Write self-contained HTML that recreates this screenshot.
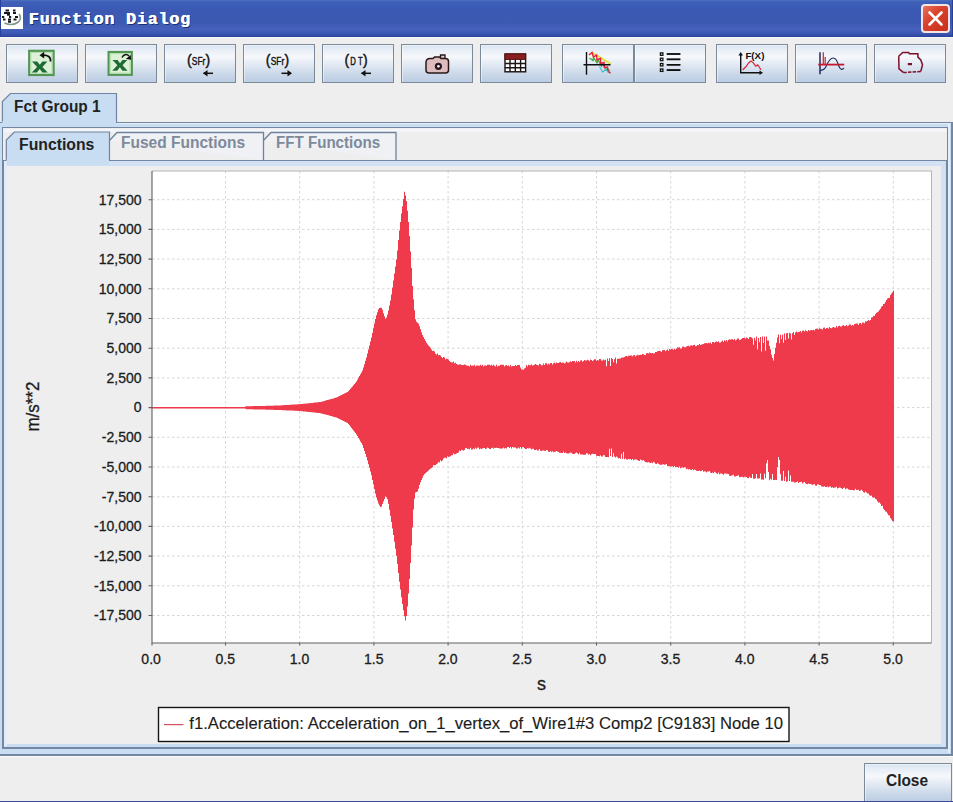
<!DOCTYPE html>
<html><head><meta charset="utf-8"><title>Function Dialog</title>
<style>
html,body{margin:0;padding:0;}
body{width:953px;height:802px;overflow:hidden;position:relative;background:#eeeeee;font-family:"Liberation Sans",sans-serif;}
.abs{position:absolute;}
#titlebar{left:0;top:0;width:953px;height:36.5px;background:linear-gradient(#4e70c2 0,#3f60b8 2px,#3b59b3 10px,#3c59b2 22px,#4561bb 29px,#3d58b4 33px,#2c449e 36.5px);}
#title{left:28.6px;top:8.6px;font:bold 16.6px/22px "Liberation Mono",monospace;letter-spacing:0.85px;color:#fff;white-space:pre;text-shadow:0.6px 0 0 #fff,1.4px 1px 0 #1c2f70;}
#appicon{left:1.2px;top:7px;width:22px;height:22px;background:#fff;}
#closex{left:921px;top:4px;width:25px;height:25px;border:2px solid #f6e4e4;border-radius:4px;background:linear-gradient(135deg,#e8705c 0,#d8432c 40%,#c8301c 100%);}
.tb{position:absolute;top:44px;width:72px;height:39px;box-sizing:border-box;border:1px solid #7a8a99;background:linear-gradient(#d9e4f1 0,#e6edf6 12%,#f6f8fb 32%,#e3eaf4 52%,#c9d7e8 80%,#bccde3 100%);box-shadow:inset 1px 1px 0 rgba(255,255,255,0.45);}
.tb svg{position:absolute;left:0;top:0;}
.line{position:absolute;background:#7487a2;}
.tabtxt{position:absolute;font-weight:bold;font-size:15px;line-height:18px;white-space:pre;color:#222;}
.ax{font-size:14px;fill:#1c1c1c;stroke:#1c1c1c;stroke-width:0.3px;font-family:"Liberation Sans",sans-serif;}
</style></head><body>
<!-- title bar -->
<div id="titlebar" class="abs"></div>
<div class="abs" style="left:0;top:0;width:1px;height:36.5px;background:#2a3f98"></div>
<div class="abs" style="left:951.5px;top:0;width:1.5px;height:36.5px;background:#2a3f98"></div>
<div id="appicon" class="abs"><svg width="22" height="22" viewBox="1 7 22 22"><path d="M4.5 23q7.500 3.500 14-1 3.500-3.500 0.500-8" stroke="#7f9a8c" stroke-width="1.600" fill="none"/><path d="M5.500 10.500h3.500M13 10.500h2.500M4 13h6M13 13h3M7 14.800h3M2 17h2.200M9 17h2.200M15 17h3M3 19.500h2.500M8 19.500h3M13.500 19.500h3M8 21.700h3" stroke="#16181c" stroke-width="2.100" fill="none"/></svg></div>
<div id="title" class="abs">Function Dialog</div>
<div id="closex" class="abs"><svg width="25" height="25" viewBox="0 0 25 25"><path d="M6.5 6.5L18.5 18.5M18.5 6.5L6.5 18.5" stroke="#fff" stroke-width="2.6" stroke-linecap="round"/></svg></div>
<div class="abs" style="left:0;top:36.5px;width:953px;height:1.5px;background:#f8f8f8"></div>

<!-- toolbar -->
<div class="tb" style="left:5.5px;"></div>
<div class="tb" style="left:84.8px;"></div>
<div class="tb" style="left:163.8px;"></div>
<div class="tb" style="left:243px;"></div>
<div class="tb" style="left:322px;"></div>
<div class="tb" style="left:401px;"></div>
<div class="tb" style="left:480px;"></div>
<div class="tb" style="left:561.8px;"></div>
<div class="tb" style="left:633.8px;"></div>
<div class="tb" style="left:715.8px;"></div>
<div class="tb" style="left:795.3px;"></div>
<div class="tb" style="left:874.4px;"></div>
<svg class="abs" style="left:0;top:40px" width="953" height="50" viewBox="0 40 953 50">
<g><!-- icon 1 -->
<rect x="29.200" y="50.800" width="24.400" height="24.200" fill="#dcf1d6" stroke="#539653" stroke-width="2.200"/><rect x="30.900" y="52.500" width="21" height="20.800" fill="none" stroke="#b4deb0" stroke-width="1"/>
<path d="M32 61.5h5.2l2.6 3.3 2.6-3.3h5l-5 5.4 5.3 5.6h-5.3l-2.7-3.5-2.8 3.5h-5.2l5.4-5.6z" fill="#1f6b35"/>
<path d="M50.5 61.5c0.6-4.5-3-6.6-7.5-6.3" fill="none" stroke="#111" stroke-width="1.700"/><path d="M39.500 55.200l4.700-3.400v6.800z" fill="#111"/>
</g>
<g><!-- icon 2 -->
<rect x="108.600" y="52" width="23.200" height="22.800" fill="#dcf1d6" stroke="#539653" stroke-width="2.200"/><rect x="110.300" y="53.700" width="19.800" height="19.400" fill="none" stroke="#b4deb0" stroke-width="1"/>
<path d="M112.500 60h5l2.500 3.200 2.500-3.200h4.800l-4.800 5.200 5.100 5.500h-5.100l-2.600-3.400-2.700 3.400h-5l5.200-5.500z" fill="#1f6b35"/>
<path d="M122 57.500c1.500-3 4.500-4 7-1.500" fill="none" stroke="#111" stroke-width="1.500"/><path d="M131.200 59.700l-5.400-0.600 4.800-4.200z" fill="#111"/>
</g>
<g><!-- icon 3 -->
<g font-family="Liberation Sans, sans-serif" fill="#111" stroke="#111" stroke-width="0.4"><text x="186.9" y="65.4" font-size="14">(</text><text x="191.8" y="65" font-size="10.6" textLength="13.6" lengthAdjust="spacingAndGlyphs">SFr</text><text x="205.6" y="65.4" font-size="14">)</text></g>
<path d="M203.500 73.300h9.500" stroke="#111" stroke-width="1.500"/><path d="M203 73.300l4.500-3.200v6.400z" fill="#111"/>
</g>
<g><!-- icon 4 -->
<g font-family="Liberation Sans, sans-serif" fill="#111" stroke="#111" stroke-width="0.4"><text x="265.8" y="65.4" font-size="14">(</text><text x="270.7" y="65" font-size="10.6" textLength="13.6" lengthAdjust="spacingAndGlyphs">SFr</text><text x="284.5" y="65.4" font-size="14">)</text></g>
<path d="M281.500 73.300h9.500" stroke="#111" stroke-width="1.500"/><path d="M292 73.300l-4.500-3.200v6.400z" fill="#111"/>
</g>
<g><!-- icon 5 -->
<g font-family="Liberation Sans, sans-serif" fill="#111" stroke="#111" stroke-width="0.4"><text x="344.4" y="65.4" font-size="14">(</text><text x="350.3" y="65" font-size="10.6" textLength="12.3" lengthAdjust="spacingAndGlyphs">D T</text><text x="363.1" y="65.4" font-size="14">)</text></g>
<path d="M361.500 73.300h9.500" stroke="#111" stroke-width="1.500"/><path d="M361 73.300l4.500-3.200v6.400z" fill="#111"/>
</g>
<g><!-- icon 6 -->
<path d="M440.500 58v-3h4.500v3" fill="#e3c8c8" stroke="#2a1818" stroke-width="1.300"/>
<path d="M426 62.500q0-4 4-4h3l1.500-1.500h5l1.500 1.500h4.500q3 0 3 3v8.500q0 3-3 3h-16.500q-3 0-3-3z" fill="#dcbcbc" stroke="#2a1818" stroke-width="1.500"/>
<circle cx="438.400" cy="66.300" r="3.600" fill="#2a1820"/><circle cx="438.400" cy="66.300" r="1.300" fill="#fff"/>
</g>
<g><!-- icon 7 -->
<rect x="505" y="54" width="20.6" height="17.8" fill="#fff" stroke="#1c1010" stroke-width="1.4"/>
<rect x="505" y="54" width="20.6" height="5.4" fill="#8a1e1e" stroke="#5a1010" stroke-width="1"/>
<path d="M505 63.5h20.600M505 67.700h20.600M510 59.500v12.300M515.300 59.500v12.300M520.600 59.500v12.300" stroke="#1c1414" stroke-width="1.400" fill="none"/>
</g>
<g><!-- icon 8 -->
<path d="M591.500 52.300l19.500 11.700" stroke="#e4e030" stroke-width="1.800" fill="none"/>
<path d="M589.500 58l3.500 2.500 0.500-3 3.500 5.500 1-3 3.500 6 1-2.500 3.500 6.500 1.500-1.500 2 2.500" stroke="#36b048" stroke-width="1.300" fill="none"/>
<path d="M589 55l3-2.500 1.500 4.500 3-2 0.500 5 3.500-1.500 0 5 3.500-1 0.500 5 3-0.500 0.500 4.500 2.500 1.500" stroke="#e8203a" stroke-width="1.500" fill="none"/>
<path d="M599.500 66.500l3 5.500 3.500-2.500 2.500 3" stroke="#30c0d0" stroke-width="1.100" fill="none"/>
<path d="M586.500 52v22.700M583.500 64.700h27" stroke="#111" stroke-width="1.400" fill="none"/>
</g>
<g><!-- icon 9 -->
<g fill="#f8f8f8" stroke="#111" stroke-width="1.300"><rect x="660.400" y="52.900" width="2.500" height="2.400"/><rect x="660.400" y="58.200" width="2.500" height="2.400"/><rect x="660.400" y="63.500" width="2.500" height="2.400"/><rect x="660.400" y="69" width="2.500" height="2.400"/></g>
<path d="M666.800 54.100h13.500M666.800 59.400h13.500M666.800 64.700h13.500M666.800 70.200h13.500" stroke="#111" stroke-width="1.500"/>
</g>
<path d="M666.800 54h13.500M666.800 59.300h13.500M666.800 64.700h13.500M666.800 70.100h13.500" stroke="#111" stroke-width="1.500"/>
</g>
<g><!-- icon 10 -->
<path d="M742.600 70l3.500-3.500 2.500-3.500 2.300-2 2 1.500 2.800 3.700 2-1.300 1.800 2.600 1.500 2.500" stroke="#d8283c" stroke-width="1.200" fill="none"/>
<path d="M740.700 54v18.800h20" stroke="#111" stroke-width="1.400" fill="none"/><path d="M740.700 52l2.300 3.500h-4.600zM763 72.800l-3.500 2.300v-4.600z" fill="#111"/>
<text x="745.400" y="59.300" font-family="Liberation Sans, sans-serif" font-weight="bold" font-size="8.500" textLength="19" lengthAdjust="spacingAndGlyphs" fill="#111">F(X)</text>
</g>
<g><!-- icon 11 -->
<path d="M820 70.500q3.500 0 5.500-3 4-9.500 7.800-9.500 3 0 5 6.600 1.500 4.700 3.500 4.700 1.200 0 2.200-1.300" stroke="#1c2a5c" stroke-width="1.200" fill="none"/>
<path d="M820 52.300v22" stroke="#1c2a5c" stroke-width="1.500" fill="none"/>
<path d="M818.200 64.600h26" stroke="#c81830" stroke-width="1.800" fill="none"/>
<path d="M823.300 64.600v-12.300M825.200 64.600v-7.600" stroke="#d8283c" stroke-width="1.300" fill="none"/>
</g>
<g><!-- icon 12 -->
<path d="M898.700 56.300l4-3.800h5.900l0.900 1.300h8.400v3.300l2.900 2.900 1.700 4.700-1.700 6.700" stroke="#7c1028" stroke-width="1.500" fill="none"/>
<path d="M920.800 71.400l-17.200 1.200" stroke="#7c1028" stroke-width="1.500" fill="none" stroke-dasharray="3.500 1.200"/>
<path d="M903.600 72.600l-4.600-3.700-0.300-12.600" stroke="#7c1028" stroke-width="1.500" fill="none"/>
<rect x="907.800" y="63" width="4.200" height="2.200" fill="#7c1028"/>
</g>
</svg>


<!-- outer tabbed pane -->
<!-- outer content band -->
<div class="abs" style="left:0;top:122px;width:953px;height:634px;background:#c8ddf2"></div>
<div class="abs" style="left:950px;top:122px;width:1px;height:633px;background:#c8ddf2"></div>
<!-- outer tab -->
<svg class="abs" style="left:0;top:90px" width="130" height="40" viewBox="0 90 130 40">
<path d="M2.400 122.500V101.500L10.400 93.500H116.500V122.500" fill="#c8ddf2" stroke="#7083a0" stroke-width="1.200"/>
<rect x="2.500" y="121" width="113.500" height="5" fill="#c8ddf2"/>
</svg>
<div class="line" style="left:0;top:121.500px;width:2px;height:1.200px"></div>
<div class="line" style="left:116px;top:121.500px;width:836px;height:1.200px"></div>
<div class="line" style="left:951px;top:121.500px;width:2px;height:634px"></div>
<div class="line" style="left:0;top:753.500px;width:953px;height:2px"></div>
<div class="abs" style="left:117px;top:123px;width:833px;height:1px;background:#e6eef8"></div>
<div class="abs" style="left:947.500px;top:123px;width:2px;height:630px;background:#e4edf8"></div>
<div class="tabtxt" style="left:13.600px;top:97.900px;font-size:16px;transform:scaleX(0.965);transform-origin:0 0;">Fct Group 1</div>

<!-- inner panel -->
<div class="abs" style="left:2px;top:127px;width:945.500px;height:621.500px;box-sizing:border-box;border:1.200px solid #7487a2;background:#eeeeee"></div>
<div class="abs" style="left:3.500px;top:128.500px;width:942px;height:3px;background:#f3f5f9"></div>
<!-- inner content band -->
<div class="abs" style="left:3px;top:160px;width:943.500px;height:588px;box-sizing:border-box;border:1.200px solid #7487a2;background:#c8ddf2"></div>
<div class="abs" style="left:4.200px;top:161.200px;width:941px;height:585.600px;background:#d2e1f4"></div>
<div class="abs" style="left:7px;top:165.500px;width:934px;height:578px;background:#eeeeee"></div>
<div class="abs" style="left:7px;top:743.500px;width:934px;height:3px;background:#c8ddf2"></div>
<div class="abs" style="left:4.200px;top:161.200px;width:3px;height:585px;background:#e2ebf7"></div>
<svg class="abs" style="left:0;top:128px" width="420" height="40" viewBox="0 128 420 40">
<path d="M6.300 161V140L14.300 132H109.500V161" fill="#c8ddf2" stroke="#7083a0" stroke-width="1.200"/>
<rect x="6.500" y="159.500" width="102.500" height="6" fill="#c8ddf2"/>
<path d="M109.500 140.500L117 132.500H263.500V160" fill="#eff1f5" stroke="#6f819d" stroke-width="1.300"/>
<path d="M263.500 140.500L271 132.500H396V160" fill="#eff1f5" stroke="#6f819d" stroke-width="1.300"/>
</svg>
<div class="tabtxt" style="left:19px;top:135.700px;font-size:16px;transform:scaleX(0.985);transform-origin:0 0;">Functions</div>
<div class="tabtxt" style="left:120.500px;top:134px;font-size:16px;color:#7e8a9a;transform:scaleX(0.970);transform-origin:0 0;">Fused Functions</div>
<div class="tabtxt" style="left:276px;top:134px;font-size:16px;color:#7e8a9a;transform:scaleX(0.945);transform-origin:0 0;">FFT Functions</div>


<!-- chart -->
<svg class="abs" style="left:0;top:0" width="953" height="802" viewBox="0 0 953 802">
<rect x="152" y="171" width="779.5" height="472" fill="#fff"/>
<path d="M152 199.7H931.5M152 229.4H931.5M152 259.1H931.5M152 288.8H931.5M152 318.5H931.5M152 348.2H931.5M152 377.9H931.5M152 407.6H931.5M152 437.3H931.5M152 467.0H931.5M152 496.8H931.5M152 526.4H931.5M152 556.1H931.5M152 585.8H931.5M152 615.5H931.5M225.5 171V643M299.7 171V643M373.9 171V643M448.1 171V643M522.3 171V643M596.5 171V643M670.7 171V643M744.9 171V643M819.1 171V643M893.3 171V643" stroke="#d6d6d6" stroke-width="1" stroke-dasharray="2.5 2.5" fill="none"/>
<path d="M152,407V407h1V407h1V407h1V407h1V407h1V407h1V407h1V407h1V407h1V407h1V407h1V407h1V407h1V407h1V407h1V407h1V407h1V407h1V407h1V407h1V407h1V407h1V407h1V407h1V407h1V407h1V407h1V407h1V407h1V407h1V407h1V407h1V407h1V407h1V407h1V407h1V407h1V407h1V407h1V407h1V407h1V407h1V407h1V407h1V407h1V407h1V407h1V407h1V407h1V407h1V407h1V407h1V407h1V407h1V407h1V407h1V407h1V407h1V407h1V407h1V407h1V407h1V407h1V407h1V407h1V407h1V407h1V407h1V407h1V407h1V407h1V407h1V407h1V407h1V407h1V407h1V407h1V407h1V407h1V407h1V407h1V407h1V407h1V407h1V407h1V407h1V407h1V407h1V407h1V407h1V407h1V407h1V407h1V406.6h1V406.3h1V406.3h1V406.3h1V406.2h1V406.2h1V406.2h1V406.2h1V406.1h1V406.1h1V406.1h1V406.1h1V406h1V406h1V406h1V406h1V406h1V405.9h1V405.9h1V405.9h1V405.9h1V405.8h1V405.8h1V405.8h1V405.8h1V405.7h1V405.7h1V405.7h1V405.7h1V405.6h1V405.6h1V405.6h1V405.5h1V405.5h1V405.4h1V405.4h1V405.3h1V405.2h1V405.2h1V405.1h1V405.1h1V405h1V404.9h1V404.9h1V404.8h1V404.8h1V404.7h1V404.6h1V404.6h1V404.5h1V404.5h1V404.4h1V404.3h1V404.3h1V404.2h1V404.1h1V404h1V403.9h1V403.8h1V403.7h1V403.6h1V403.5h1V403.4h1V403.3h1V403.2h1V403.1h1V403h1V402.9h1V402.8h1V402.6h1V402.5h1V402.4h1V402.3h1V402.2h1V402.1h1V402h1V401.7h1V401.4h1V401.2h1V400.9h1V400.6h1V400.3h1V400h1V399.8h1V399.5h1V399.2h1V398.9h1V398.7h1V398.4h1V398.1h1V397.8h1V397.5h1V397.1h1V396.6h1V396.1h1V395.6h1V395.1h1V394.6h1V394.1h1V393.6h1V393.1h1V392.6h1V392.1h1V391.3h1V390.1h1V388.8h1V387.6h1V386.4h1V385.2h1V383.9h1V382.7h1V381.5h1V379.7h1V377.8h1V376h1V374.2h1V372.4h1V370.5h1V367.6h1V364.2h1V360.8h1V357.4h1V353.6h1V349.6h1V345.6h1V341.6h1V337.5h1V332.9h1V328.2h1V323.5h1V318.9h1V315.2h1V312.2h1V309.2h1V307.9h1V307.8h1V307.7h1V309.7h1V313.2h1V316.2h1V318.8h1V317.5h1V314.6h1V310.5h1V305.6h1V300.6h1V294.4h1V287.5h1V280.5h1V273.5h1V266.5h1V259.5h1V250.4h1V240h1V230.6h1V221.9h1V213.5h1V206.3h1V199.1h1V191.7h1V195.4h1V200.9h1V210.8h1V222h1V236h1V251.5h1V268.1h1V286h1V299.2h1V310.3h1V319.2h1V321.8h1V322.8h1V323.8h1V326.3h1V329.2h1V332.2h1V334.9h1V336.9h1V338.9h1V340.8h1V342.8h1V344.2h1V345.4h1V346.6h1V347.7h1V349.5h1V351.1h1V350.8h1V351.5h1V353.8h1V354.5h1V353.6h1V355.2h1V354.9h1V355.5h1V357h1V358.1h1V357h1V357.5h1V359.6h1V358.5h1V359h1V359.5h1V361h1V361.9h1V362.3h1V362.6h1V361.4h1V363.3h1V362.7h1V364h1V364.4h1V364.7h1V364.3h1V364.6h1V364.8h1V365h1V364.9h1V364.5h1V364.8h1V365.4h1V365.8h1V365.8h1V366.4h1V364.8h1V365.8h1V365.4h1V365.8h1V364.8h1V366.4h1V365.4h1V365.4h1V365.8h1V365.8h1V364.8h1V365.8h1V364.8h1V366.4h1V365.4h1V365.4h1V365.8h1V364.8h1V364.8h1V364.8h1V365.4h1V364.8h1V365.8h1V364.8h1V365.8h1V366.4h1V364.8h1V366.4h1V365.8h1V365.8h1V364.8h1V364.8h1V364.8h1V364.8h1V366.4h1V365.5h1V364.9h1V365.9h1V365.5h1V366.5h1V364.9h1V366.5h1V365.9h1V365.9h1V365.9h1V365h1V366h1V365h1V365h1V365h1V367.4h1V369.3h1V369.5h1V369.7h1V368.6h1V367.8h1V364.9h1V366.4h1V364.7h1V365.2h1V365.2h1V364.5h1V365.4h1V365.3h1V364.8h1V364.1h1V364.7h1V365h1V365.5h1V363.8h1V364.3h1V365.3h1V365.2h1V363.5h1V365h1V363.3h1V363.3h1V364.8h1V363.7h1V364.6h1V362.9h1V362.9h1V364.4h1V363.3h1V362.6h1V363.5h1V362.4h1V363h1V362.9h1V362.2h1V362.1h1V363h1V362.5h1V362.8h1V363.4h1V362.7h1V361.6h1V362.5h1V362.4h1V362.3h1V361.2h1V362.1h1V361.1h1V361h1V360.9h1V362.4h1V360.7h1V362.2h1V361.1h1V362.1h1V360.4h1V360.3h1V361.8h1V361.1h1V360h1V360.5h1V360.4h1V359.8h1V360.3h1V361.2h1V359.5h1V360h1V360.9h1V360.3h1V359.2h1V359.2h1V360.7h1V360.1h1V360.6h1V359h1V358.9h1V360.5h1V360.4h1V359.4h1V360.3h1V359.7h1V366.2h1V358.5h1V361h1V358.2h1V366.1h1V358h1V358.9h1V362.3h1V359.2h1V357.5h1V363.4h1V358.8h1V358.7h1V358.6h1V358.4h1V357.7h1V357.6h1V357.5h1V356.9h1V356.2h1V356.1h1V356.6h1V355.8h1V355.7h1V355.6h1V355.5h1V356.3h1V355.2h1V355.1h1V356.5h1V355.4h1V354.7h1V355.2h1V355h1V354.8h1V355.1h1V353.9h1V354.3h1V355.1h1V354.9h1V353.2h1V353h1V353.4h1V352.6h1V353h1V353.3h1V353.1h1V353.5h1V353.3h1V352.1h1V352h1V351.2h1V351h1V350.8h1V351.2h1V352.1h1V350.3h1V350.1h1V349.9h1V351.3h1V350.2h1V349.4h1V350.8h1V349h1V349.4h1V348.7h1V349.1h1V349.9h1V348.7h1V349.5h1V348.4h1V347.6h1V347.4h1V347.2h1V348.6h1V348.5h1V346.7h1V346.5h1V347.3h1V347.2h1V346.6h1V345.9h1V345.7h1V346.6h1V345.4h1V345.3h1V345.7h1V345h1V344.8h1V346.3h1V346.1h1V345h1V345.2h1V344.1h1V344.9h1V344.4h1V344.2h1V344.1h1V343.3h1V343.2h1V343h1V343.5h1V342.7h1V343.2h1V342.4h1V343.9h1V342.1h1V342h1V342.8h1V341.7h1V341.5h1V342h1V341.2h1V342.7h1V342.5h1V341.4h1V340.6h1V342.1h1V340.3h1V341.2h1V340h1V341.5h1V339.7h1V339.6h1V339.4h1V339.3h1V339.2h1V340h1V338.9h1V340.4h1V339.7h1V338.6h1V338.5h1V340h1V339.8h1V339.1h1V338h1V337.9h1V337.8h1V338.7h1V337.5h1V338h1V338.9h1V337.2h1V337.1h1V337.6h1V338.5h1V344.8h1V337.7h1V340.6h1V336.5h1V349.4h1V337.9h1V342.2h1V337.1h1V351.6h1V336.6h1V342.9h1V336.4h1V350.7h1V336.6h1V340.5h1V340.4h1V345.9h1V349.2h1V354.7h1V358.1h1V360.6h1V353.9h1V347.8h1V342.7h1V337.6h1V334.4h1V343.3h1V334.7h1V339h1V334.8h1V342.7h1V333.5h1V339.9h1V333.2h1V333h1V338.5h1V332.7h1V333.6h1V339.4h1V333.3h1V332.1h1V334.9h1V332.4h1V331.6h1V332.5h1V331.9h1V331.8h1V331h1V332.5h1V330.7h1V330.6h1V331.4h1V330.3h1V331.1h1V331.6h1V329.9h1V330.7h1V330.2h1V330h1V330.3h1V329.8h1V330.6h1V328.9h1V328.7h1V328.6h1V329.4h1V328.3h1V328.8h1V329h1V329.5h1V327.7h1V327.6h1V329.1h1V328h1V327.8h1V328.7h1V327h1V327.9h1V328.3h1V327.6h1V327.1h1V327.4h1V327.8h1V326.1h1V327.6h1V325.9h1V325.7h1V326.6h1V326.5h1V325.4h1V325.2h1V326.1h1V326h1V324.9h1V326.3h1V325.6h1V324.5h1V324.4h1V325.8h1V325.1h1V325.6h1V323.9h1V323.7h1V323.6h1V323.5h1V325h1V323.2h1V323.1h1V324.3h1V322.4h1V322.6h1V323.2h1V321.2h1V321.4h1V321h1V320h1V320.8h1V319.9h1V317.5h1V317.3h1V315.8h1V316h1V313.9h1V312.8h1V312.3h1V311.6h1V310.1h1V308.7h1V306.8h1V306h1V304.1h1V303.7h1V301.9h1V299.9h1V298.5h1V297.9h1V297.7h1V294.9h1V293.5h1V292.2h1V290.8h1V521.6h-1V520.9h-1V519.4h-1V517.9h-1V515.6h-1V515.3h-1V513.4h-1V511.7h-1V511.4h-1V510.1h-1V508.7h-1V505.8h-1V506.1h-1V503.8h-1V502.5h-1V502.5h-1V501.5h-1V499.5h-1V498.9h-1V497.5h-1V497.8h-1V497.2h-1V495.5h-1V495.8h-1V495.2h-1V493.5h-1V493.5h-1V492.6h-1V491.6h-1V492.7h-1V492.3h-1V490.8h-1V489.8h-1V490.4h-1V490.9h-1V489.8h-1V490h-1V489.9h-1V488.8h-1V490.3h-1V490.2h-1V490.1h-1V490h-1V489.9h-1V489.7h-1V489.6h-1V488.5h-1V488.4h-1V489.3h-1V487.6h-1V488.1h-1V488.9h-1V488.2h-1V487.7h-1V487.6h-1V487.9h-1V488.4h-1V486.7h-1V487.5h-1V487.4h-1V487.9h-1V487.2h-1V487.7h-1V486.6h-1V486.5h-1V487.3h-1V486.6h-1V487.1h-1V487h-1V486.3h-1V486.8h-1V486.6h-1V486.4h-1V485.3h-1V485.1h-1V484.4h-1V484.2h-1V485.7h-1V485.5h-1V484.3h-1V484.2h-1V485h-1V484.3h-1V484.1h-1V483.9h-1V483.4h-1V484.2h-1V484.1h-1V483.3h-1V482.1h-1V482.6h-1V483.4h-1V481.7h-1V482.1h-1V482h-1V482.9h-1V481.2h-1V482.1h-1V482.6h-1V482.5h-1V481.8h-1V481.8h-1V481.7h-1V475.6h-1V481.1h-1V470.4h-1V481.3h-1V481.8h-1V476.7h-1V481h-1V470.9h-1V480.8h-1V480.7h-1V474.2h-1V460.1h-1V457.1h-1V467h-1V479.9h-1V479.8h-1V480.1h-1V480h-1V473.9h-1V479.8h-1V478.7h-1V480.2h-1V472.1h-1V460h-1V463.3h-1V478.2h-1V473.8h-1V479.7h-1V479.6h-1V479.5h-1V473.4h-1V478.3h-1V478.6h-1V478.5h-1V474h-1V478.3h-1V478.8h-1V478.7h-1V474h-1V477.9h-1V477.8h-1V476.7h-1V478.2h-1V478h-1V476.9h-1V476.8h-1V476.7h-1V477.5h-1V476.8h-1V476.7h-1V477.2h-1V477h-1V475.3h-1V475.8h-1V476.1h-1V476.5h-1V476.4h-1V474.7h-1V475.2h-1V475.4h-1V475.9h-1V475.7h-1V474h-1V473.8h-1V473.7h-1V473.5h-1V473.4h-1V474.8h-1V474.1h-1V473.5h-1V473.4h-1V474.2h-1V472.5h-1V473.9h-1V473.2h-1V472.6h-1V471.8h-1V473.3h-1V472.5h-1V473h-1V472.8h-1V471.1h-1V471.5h-1V471.4h-1V472.2h-1V471.5h-1V471.3h-1V471.8h-1V470h-1V470.9h-1V471.3h-1V470.6h-1V471h-1V470.9h-1V470.7h-1V470h-1V469.4h-1V470.3h-1V469.1h-1V470h-1V469.8h-1V469.1h-1V469.5h-1V468.7h-1V469.2h-1V467.4h-1V467.3h-1V467.7h-1V467.5h-1V467.4h-1V468.2h-1V466.4h-1V467.8h-1V467h-1V466.9h-1V467.3h-1V466.1h-1V466.9h-1V466.2h-1V466.6h-1V466.4h-1V466.2h-1V466.1h-1V465.9h-1V464.1h-1V464.5h-1V464.8h-1V464.2h-1V464.4h-1V464.8h-1V464.7h-1V464.5h-1V463.7h-1V463.1h-1V464h-1V463.8h-1V462.6h-1V461.8h-1V463.3h-1V462.5h-1V462.9h-1V462.7h-1V462h-1V462.4h-1V462.2h-1V462h-1V461.3h-1V460.1h-1V460.5h-1V460.3h-1V459.6h-1V461h-1V460.8h-1V460.1h-1V459.6h-1V459.5h-1V459.4h-1V460.2h-1V459.1h-1V460h-1V458.9h-1V459.2h-1V459h-1V459.5h-1V459.4h-1V458.3h-1V459.2h-1V452.1h-1V458.9h-1V453.8h-1V458.7h-1V458h-1V458.5h-1V457.3h-1V456.6h-1V457.5h-1V456.4h-1V453.3h-1V457.1h-1V448.6h-1V455.9h-1V448.8h-1V457.3h-1V457.1h-1V457h-1V456.9h-1V455.2h-1V455.1h-1V456.6h-1V456.4h-1V455.3h-1V456.2h-1V456.1h-1V456h-1V455.8h-1V454.1h-1V454h-1V453.9h-1V453.8h-1V454.3h-1V455.2h-1V454.1h-1V454.5h-1V453.4h-1V453.3h-1V454.8h-1V454.7h-1V454.7h-1V454.6h-1V454.5h-1V454.4h-1V452.7h-1V454.3h-1V453.2h-1V452.5h-1V453h-1V453.9h-1V453.9h-1V453.8h-1V452.7h-1V452.6h-1V452.9h-1V453.4h-1V453.4h-1V453.3h-1V452.6h-1V453.1h-1V451.4h-1V453h-1V452.9h-1V452.8h-1V452.7h-1V452h-1V451.6h-1V450.9h-1V451.8h-1V451.7h-1V452.2h-1V451.2h-1V452.1h-1V451h-1V451.9h-1V451.8h-1V450.2h-1V450.1h-1V450.9h-1V450.8h-1V450.6h-1V450.5h-1V451h-1V450.8h-1V449.1h-1V450.5h-1V450.4h-1V449.6h-1V450.1h-1V450h-1V448.8h-1V448.7h-1V449.5h-1V448.4h-1V447.7h-1V448.6h-1V448.1h-1V449h-1V449h-1V448.3h-1V447.2h-1V447.1h-1V448.7h-1V447h-1V448.5h-1V447.4h-1V448.4h-1V448.4h-1V447.4h-1V447.4h-1V447.5h-1V446.9h-1V448.5h-1V446.9h-1V447.9h-1V446.9h-1V446.9h-1V448.5h-1V447.9h-1V448.6h-1V447.6h-1V448.6h-1V448.6h-1V448.6h-1V448.6h-1V448.1h-1V448.1h-1V447.7h-1V448.1h-1V447.8h-1V448.8h-1V447.8h-1V447.9h-1V448.9h-1V448.9h-1V447.9h-1V447.4h-1V448.4h-1V449h-1V448.1h-1V448.1h-1V448.5h-1V449.1h-1V448.6h-1V449.2h-1V447.6h-1V447.7h-1V448.7h-1V447.7h-1V449.3h-1V448.3h-1V449.4h-1V449.4h-1V447.8h-1V449.4h-1V448.8h-1V448.9h-1V447.9h-1V447.9h-1V450h-1V450.4h-1V450.2h-1V449.7h-1V451.1h-1V450.5h-1V452.6h-1V453h-1V453.4h-1V453.9h-1V454.3h-1V453.2h-1V455.3h-1V455.2h-1V456.3h-1V456.8h-1V456.7h-1V456.2h-1V458.3h-1V457.8h-1V457.8h-1V458.4h-1V460.6h-1V461.2h-1V460.2h-1V462.4h-1V462h-1V463.6h-1V464.3h-1V465h-1V465.2h-1V464.9h-1V467.2h-1V468h-1V468.7h-1V469.5h-1V470.4h-1V471.4h-1V472.3h-1V473.2h-1V474.1h-1V475.5h-1V477.8h-1V480h-1V482.3h-1V485.1h-1V488.7h-1V491.4h-1V491.9h-1V492.5h-1V498.7h-1V509.5h-1V527.4h-1V545.4h-1V563.1h-1V579h-1V593.4h-1V606.6h-1V616h-1V620.6h-1V616.2h-1V610.3h-1V604.1h-1V597.3h-1V589.5h-1V581.7h-1V573h-1V564h-1V555.7h-1V548.7h-1V541.8h-1V535h-1V528.5h-1V522h-1V515.7h-1V509.7h-1V503.8h-1V499.3h-1V497.2h-1V496.4h-1V498.9h-1V501.4h-1V503.9h-1V506.4h-1V507h-1V505.6h-1V503.5h-1V500.5h-1V497.5h-1V493.8h-1V489.2h-1V484.6h-1V479.9h-1V475.3h-1V471.5h-1V467.8h-1V464.2h-1V460.5h-1V457.1h-1V454h-1V451h-1V447.9h-1V444.9h-1V443.1h-1V441.4h-1V439.6h-1V437.9h-1V436.1h-1V434.4h-1V433.1h-1V431.8h-1V430.5h-1V429.2h-1V427.9h-1V426.6h-1V425.3h-1V424h-1V423h-1V422.5h-1V422h-1V421.5h-1V421h-1V420.5h-1V419.9h-1V419.4h-1V418.9h-1V418.4h-1V417.9h-1V417.5h-1V417.2h-1V416.9h-1V416.7h-1V416.4h-1V416.1h-1V415.9h-1V415.6h-1V415.3h-1V415.1h-1V414.8h-1V414.5h-1V414.3h-1V414h-1V413.7h-1V413.5h-1V413.2h-1V413.1h-1V413h-1V412.9h-1V412.8h-1V412.7h-1V412.6h-1V412.4h-1V412.3h-1V412.2h-1V412.1h-1V412h-1V411.9h-1V411.8h-1V411.7h-1V411.6h-1V411.5h-1V411.4h-1V411.3h-1V411.2h-1V411.1h-1V411h-1V410.9h-1V410.9h-1V410.8h-1V410.8h-1V410.7h-1V410.7h-1V410.6h-1V410.6h-1V410.6h-1V410.5h-1V410.5h-1V410.4h-1V410.4h-1V410.3h-1V410.3h-1V410.2h-1V410.2h-1V410.1h-1V410.1h-1V410h-1V410h-1V409.9h-1V409.9h-1V409.9h-1V409.9h-1V409.8h-1V409.8h-1V409.8h-1V409.8h-1V409.7h-1V409.7h-1V409.7h-1V409.7h-1V409.6h-1V409.6h-1V409.6h-1V409.6h-1V409.5h-1V409.5h-1V409.5h-1V409.5h-1V409.5h-1V409.4h-1V409.4h-1V409.4h-1V409.4h-1V409.3h-1V409.3h-1V409.3h-1V409.3h-1V409.2h-1V409.2h-1V409.2h-1V408.8h-1V408.4h-1V408.4h-1V408.4h-1V408.4h-1V408.4h-1V408.4h-1V408.4h-1V408.4h-1V408.4h-1V408.4h-1V408.4h-1V408.4h-1V408.4h-1V408.4h-1V408.4h-1V408.4h-1V408.4h-1V408.4h-1V408.4h-1V408.4h-1V408.4h-1V408.4h-1V408.4h-1V408.4h-1V408.4h-1V408.4h-1V408.4h-1V408.4h-1V408.4h-1V408.4h-1V408.4h-1V408.4h-1V408.4h-1V408.4h-1V408.4h-1V408.4h-1V408.4h-1V408.4h-1V408.4h-1V408.4h-1V408.4h-1V408.4h-1V408.4h-1V408.4h-1V408.4h-1V408.4h-1V408.4h-1V408.4h-1V408.4h-1V408.4h-1V408.4h-1V408.4h-1V408.4h-1V408.4h-1V408.4h-1V408.4h-1V408.4h-1V408.4h-1V408.4h-1V408.4h-1V408.4h-1V408.4h-1V408.4h-1V408.4h-1V408.4h-1V408.4h-1V408.4h-1V408.4h-1V408.4h-1V408.4h-1V408.4h-1V408.4h-1V408.4h-1V408.4h-1V408.4h-1V408.4h-1V408.4h-1V408.4h-1V408.4h-1V408.4h-1V408.4h-1V408.4h-1V408.4h-1V408.4h-1V408.4h-1V408.4h-1V408.4h-1V408.4h-1V408.4h-1V408.4h-1V408.4h-1V408.4h-1V408.4h-1Z" fill="#ee3a4b"/>
<path d="M152 171H931.5V643" stroke="#b4b4b4" stroke-width="1" fill="none"/>
<path d="M152 171V645.5M152 643H931.5M148.5 199.7h3.5M148.5 229.4h3.5M148.5 259.1h3.5M148.5 288.8h3.5M148.5 318.5h3.5M148.5 348.2h3.5M148.5 377.9h3.5M148.5 407.6h3.5M148.5 437.3h3.5M148.5 467.0h3.5M148.5 496.8h3.5M148.5 526.4h3.5M148.5 556.1h3.5M148.5 585.8h3.5M148.5 615.5h3.5M225.5 643v2.5M299.7 643v2.5M373.9 643v2.5M448.1 643v2.5M522.3 643v2.5M596.5 643v2.5M670.7 643v2.5M744.9 643v2.5M819.1 643v2.5M893.3 643v2.5" stroke="#606060" stroke-width="1.1" fill="none"/>
<g class="ax" text-anchor="end">
<text x="141.5" y="204.5" textLength="42.8" lengthAdjust="spacingAndGlyphs">17,500</text>
<text x="141.5" y="234.2" textLength="42.8" lengthAdjust="spacingAndGlyphs">15,000</text>
<text x="141.5" y="263.9" textLength="42.8" lengthAdjust="spacingAndGlyphs">12,500</text>
<text x="141.5" y="293.6" textLength="42.8" lengthAdjust="spacingAndGlyphs">10,000</text>
<text x="141.5" y="323.3" textLength="35.0" lengthAdjust="spacingAndGlyphs">7,500</text>
<text x="141.5" y="353.1" textLength="35.0" lengthAdjust="spacingAndGlyphs">5,000</text>
<text x="141.5" y="382.8" textLength="35.0" lengthAdjust="spacingAndGlyphs">2,500</text>
<text x="141.5" y="412.4" textLength="7.8" lengthAdjust="spacingAndGlyphs">0</text>
<text x="141.5" y="442.1" textLength="39.7" lengthAdjust="spacingAndGlyphs">-2,500</text>
<text x="141.5" y="471.8" textLength="39.7" lengthAdjust="spacingAndGlyphs">-5,000</text>
<text x="141.5" y="501.6" textLength="39.7" lengthAdjust="spacingAndGlyphs">-7,500</text>
<text x="141.5" y="531.2" textLength="47.5" lengthAdjust="spacingAndGlyphs">-10,000</text>
<text x="141.5" y="560.9" textLength="47.5" lengthAdjust="spacingAndGlyphs">-12,500</text>
<text x="141.5" y="590.6" textLength="47.5" lengthAdjust="spacingAndGlyphs">-15,000</text>
<text x="141.5" y="620.3" textLength="47.5" lengthAdjust="spacingAndGlyphs">-17,500</text>
</g>
<g class="ax" text-anchor="middle">
<text x="151.1" y="664.3" textLength="19.5" lengthAdjust="spacingAndGlyphs">0.0</text>
<text x="225.3" y="664.3" textLength="19.5" lengthAdjust="spacingAndGlyphs">0.5</text>
<text x="299.5" y="664.3" textLength="19.5" lengthAdjust="spacingAndGlyphs">1.0</text>
<text x="373.7" y="664.3" textLength="19.5" lengthAdjust="spacingAndGlyphs">1.5</text>
<text x="447.9" y="664.3" textLength="19.5" lengthAdjust="spacingAndGlyphs">2.0</text>
<text x="522.1" y="664.3" textLength="19.5" lengthAdjust="spacingAndGlyphs">2.5</text>
<text x="596.3" y="664.3" textLength="19.5" lengthAdjust="spacingAndGlyphs">3.0</text>
<text x="670.5" y="664.3" textLength="19.5" lengthAdjust="spacingAndGlyphs">3.5</text>
<text x="744.7" y="664.3" textLength="19.5" lengthAdjust="spacingAndGlyphs">4.0</text>
<text x="818.9" y="664.3" textLength="19.5" lengthAdjust="spacingAndGlyphs">4.5</text>
<text x="893.1" y="664.3" textLength="19.5" lengthAdjust="spacingAndGlyphs">5.0</text>
</g>
<text class="ax" x="541.6" y="690.3" text-anchor="middle" style="font-size:18px">s</text>
<text class="ax" transform="translate(39.3,406.6) rotate(-90)" text-anchor="middle" style="font-size:18px" textLength="50" lengthAdjust="spacingAndGlyphs">m/s**2</text>
<rect x="158.5" y="707.5" width="630.5" height="34" fill="#fff" stroke="#161616" stroke-width="1.4"/>
<path d="M164 724.6h19.5" stroke="#d4505e" stroke-width="1.2"/>
<text class="ax" x="189.3" y="728.7" style="font-size:16px;stroke-width:0.12px" textLength="593.6" lengthAdjust="spacingAndGlyphs">f1.Acceleration: Acceleration_on_1_vertex_of_Wire1#3 Comp2 [C9183] Node 10</text>
</svg>

<!-- bottom -->
<div class="abs" style="left:0;top:755.5px;width:953px;height:1.5px;background:#fafafa"></div>
<div class="abs" style="left:863.5px;top:762.8px;width:88.7px;height:40px;box-sizing:border-box;border:1.2px solid #7a8a99;background:linear-gradient(#d9e4f1 0,#e6edf6 12%,#f6f8fb 32%,#e3eaf4 52%,#c9d7e8 80%,#bccde3 100%);box-shadow:inset 1px 1px 0 rgba(255,255,255,0.45);"></div>
<div class="tabtxt" style="left:885.5px;top:772px;font-size:16px;transform:scaleX(0.965);transform-origin:0 0;">Close</div>
<div class="abs" style="left:0;top:800.5px;width:953px;height:1.5px;background:#3a4c98"></div>
</body></html>
